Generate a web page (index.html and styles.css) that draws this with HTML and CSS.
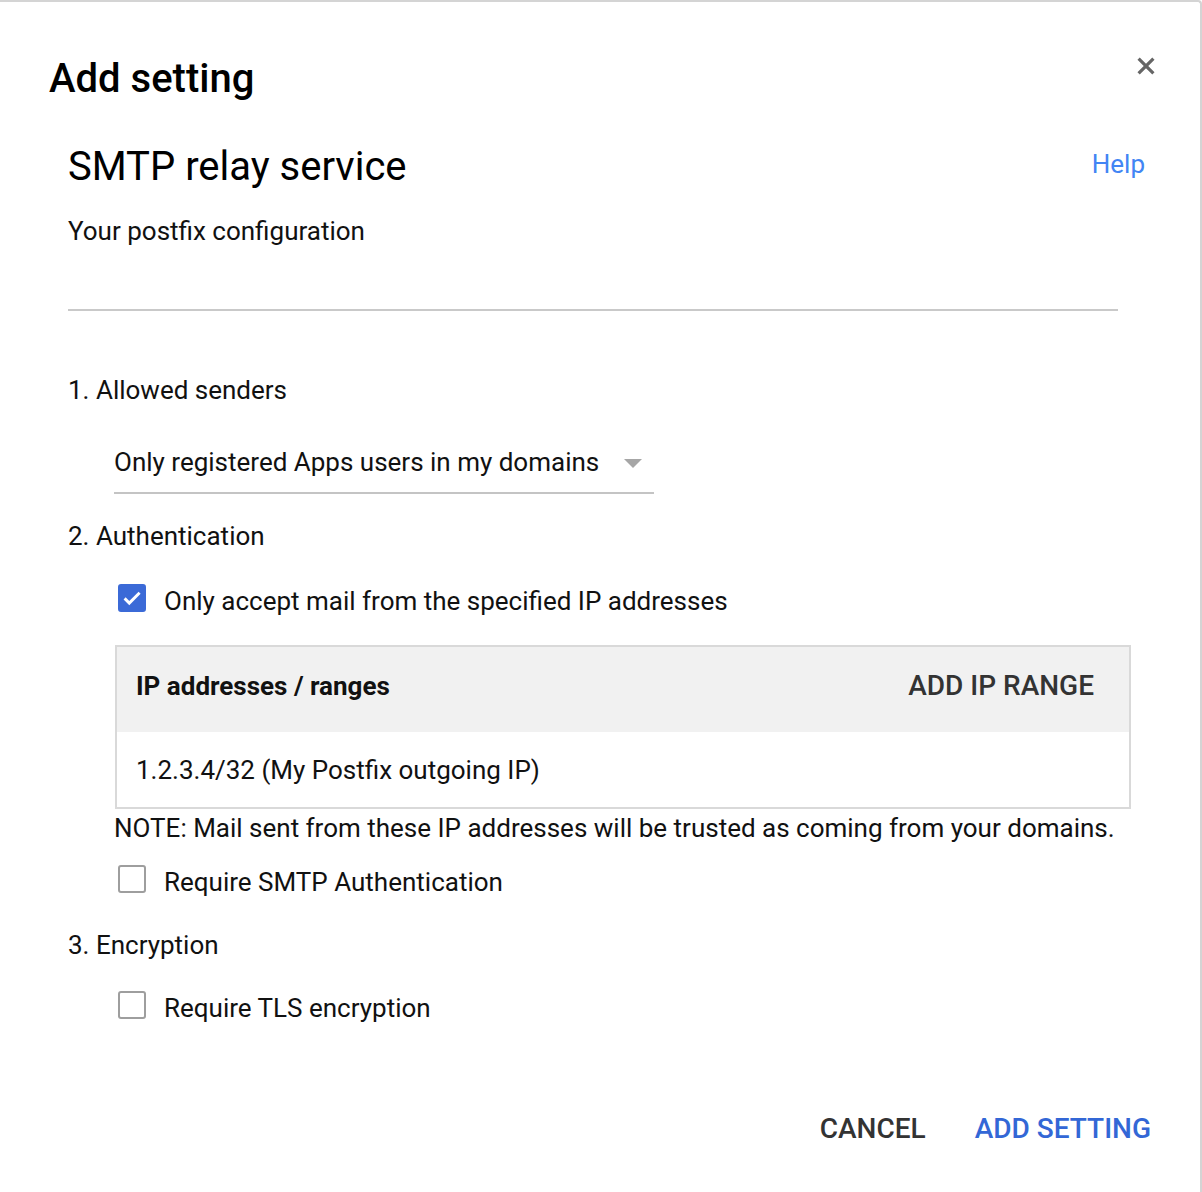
FILE: index.html
```html
<!DOCTYPE html>
<html lang="en">
<head>
<meta charset="utf-8">
<title>Add setting</title>
<link rel="stylesheet" href="styles.css">
</head>
<body>
<div class="dialog">
  <div class="dialog-header">
    <h1 class="dialog-title">Add setting</h1>
    <button class="close-btn" aria-label="Close">
      <svg viewBox="0 0 18 18" width="18" height="18"><path d="M1.6 1.6L16.4 16.4M16.4 1.6L1.6 16.4" stroke="#666" stroke-width="3.2" stroke-linecap="butt" fill="none"/></svg>
    </button>
  </div>
  <div class="dialog-body">
    <div class="section-head">
      <h2 class="section-title">SMTP relay service</h2>
      <a class="help-link" href="#">Help</a>
    </div>
    <p class="subtitle">Your postfix configuration</p>
    <div class="divider"></div>

    <p class="step step-1">1. Allowed senders</p>
    <div class="select">
      <span class="select-value">Only registered Apps users in my domains</span>
      <span class="select-arrow"></span>
    </div>

    <p class="step step-2">2. Authentication</p>
    <label class="check-row check-ip">
      <span class="checkbox checked">
        <svg viewBox="0 0 24 24" width="26" height="26"><path d="M4.6 12.4l4.7 4.7L19.6 6.8" fill="none" stroke="#fff" stroke-width="2.9"/></svg>
      </span>
      <span class="check-label">Only accept mail from the specified IP addresses</span>
    </label>

    <div class="ip-table">
      <div class="ip-head">
        <span class="ip-head-title">IP addresses / ranges</span>
        <span class="ip-add">ADD IP RANGE</span>
      </div>
      <div class="ip-row">1.2.3.4/32 (My Postfix outgoing IP)</div>
    </div>
    <p class="note">NOTE: Mail sent from these IP addresses will be trusted as coming from your domains.</p>

    <label class="check-row check-smtp">
      <span class="checkbox"></span>
      <span class="check-label">Require SMTP Authentication</span>
    </label>

    <p class="step step-3">3. Encryption</p>
    <label class="check-row check-tls">
      <span class="checkbox"></span>
      <span class="check-label">Require TLS encryption</span>
    </label>
  </div>
  <div class="dialog-footer">
    <button class="btn btn-cancel">CANCEL</button>
    <button class="btn btn-primary">ADD SETTING</button>
  </div>
</div>
</body>
</html>
```

FILE: styles.css
```css
* { box-sizing: border-box; }
html, body { margin: 0; padding: 0; background: #fff; }
body {
  font-family: Roboto, "Liberation Sans", Arial, sans-serif;
  color: #111;
  width: 1202px;
  height: 1192px;
  overflow: hidden;
}
p, h1, h2 { margin: 0; font-weight: 400; }

.dialog {
  width: 1202px;
  height: 1192px;
  border-top: 2px solid #d4d4d4;
  border-right: 2px solid #d4d4d4;
  border-top-right-radius: 4px;
  background: #fff;
  display: flex;
  flex-direction: column;
}

.dialog-header {
  display: flex;
  justify-content: space-between;
  align-items: flex-start;
  padding: 53px 45px 0 49px;
}
.dialog-title {
  font-size: 40px;
  font-weight: 500;
  line-height: 48px;
  color: #000;
}
.close-btn {
  border: 0;
  background: none;
  padding: 0;
  margin-top: 2px;
  width: 18px;
  height: 18px;
  display: block;
}
.close-btn svg { display: block; }

.dialog-body {
  padding: 40px 55px 0 68px;
  flex: 1;
}
.section-head {
  display: flex;
  justify-content: space-between;
  align-items: flex-start;
}
.section-title {
  font-size: 40px;
  line-height: 48px;
  color: #000;
}
.help-link {
  font-size: 26px;
  line-height: 30px;
  color: #4285f4;
  text-decoration: none;
  margin-top: 6px;
}
.subtitle {
  font-size: 26px;
  line-height: 30px;
  margin-top: 25px;
}
.divider {
  height: 2px;
  background: #c9c9c9;
  margin: 63px 27px 0 0;
}

.step {
  font-size: 26px;
  line-height: 30px;
}
.step-1 { margin-top: 64px; }
.step-2 { margin-top: 27px; }
.step-3 { margin-top: 33px; }

.select {
  margin: 42px 0 0 46px;
  width: 540px;
  border-bottom: 2px solid #c4c4c4;
  padding-bottom: 15px;
  display: flex;
  align-items: center;
  justify-content: space-between;
  padding-right: 12px;
}
.select-value {
  font-size: 26px;
  line-height: 30px;
}
.select-arrow {
  width: 0;
  height: 0;
  border-left: 9px solid transparent;
  border-right: 9px solid transparent;
  border-top: 9px solid #a6a6a6;
  margin-top: 2px;
}

.check-row {
  display: flex;
  align-items: flex-start;
  gap: 18px;
  padding-left: 50px;
  font-size: 26px;
  line-height: 30px;
}
.check-label { margin-top: 3px; }
.check-ip { margin-top: 32px; }
.check-smtp { margin-top: 21px; }
.check-tls { margin-top: 30px; }
.checkbox {
  margin-top: 1px;
  width: 28px;
  height: 28px;
  border: 2px solid #9e9e9e;
  border-radius: 3px;
  display: flex;
  align-items: center;
  justify-content: center;
  flex: none;
}
.checkbox.checked {
  background: #3b6ad7;
  border-color: #3b6ad7;
}
.checkbox svg { display: block; }

.ip-table {
  margin: 29px 14px 0 47px;
  border: 2px solid #d9d9d9;
}
.ip-head {
  height: 85px;
  background: #f1f1f1;
  display: flex;
  align-items: center;
  justify-content: space-between;
  padding: 0 35px 8px 19px;
}
.ip-head-title {
  font-size: 26px;
  font-weight: 700;
  line-height: 30px;
}
.ip-add {
  font-size: 28px;
  font-weight: 500;
  line-height: 30px;
  color: #333;
}
.ip-row {
  height: 75px;
  display: flex;
  align-items: center;
  padding-left: 19px;
  font-size: 26px;
  line-height: 30px;
}
.note {
  font-size: 26px;
  line-height: 30px;
  margin: 4px 0 0 46px;
}

.dialog-footer {
  display: flex;
  justify-content: flex-end;
  gap: 49px;
  padding: 0 49px 47px 0;
}
.btn {
  border: 0;
  background: none;
  padding: 0;
  font-family: inherit;
  font-size: 28px;
  font-weight: 500;
  line-height: 32px;
  color: #333;
}
.btn-primary { color: #3367d6; }
```
